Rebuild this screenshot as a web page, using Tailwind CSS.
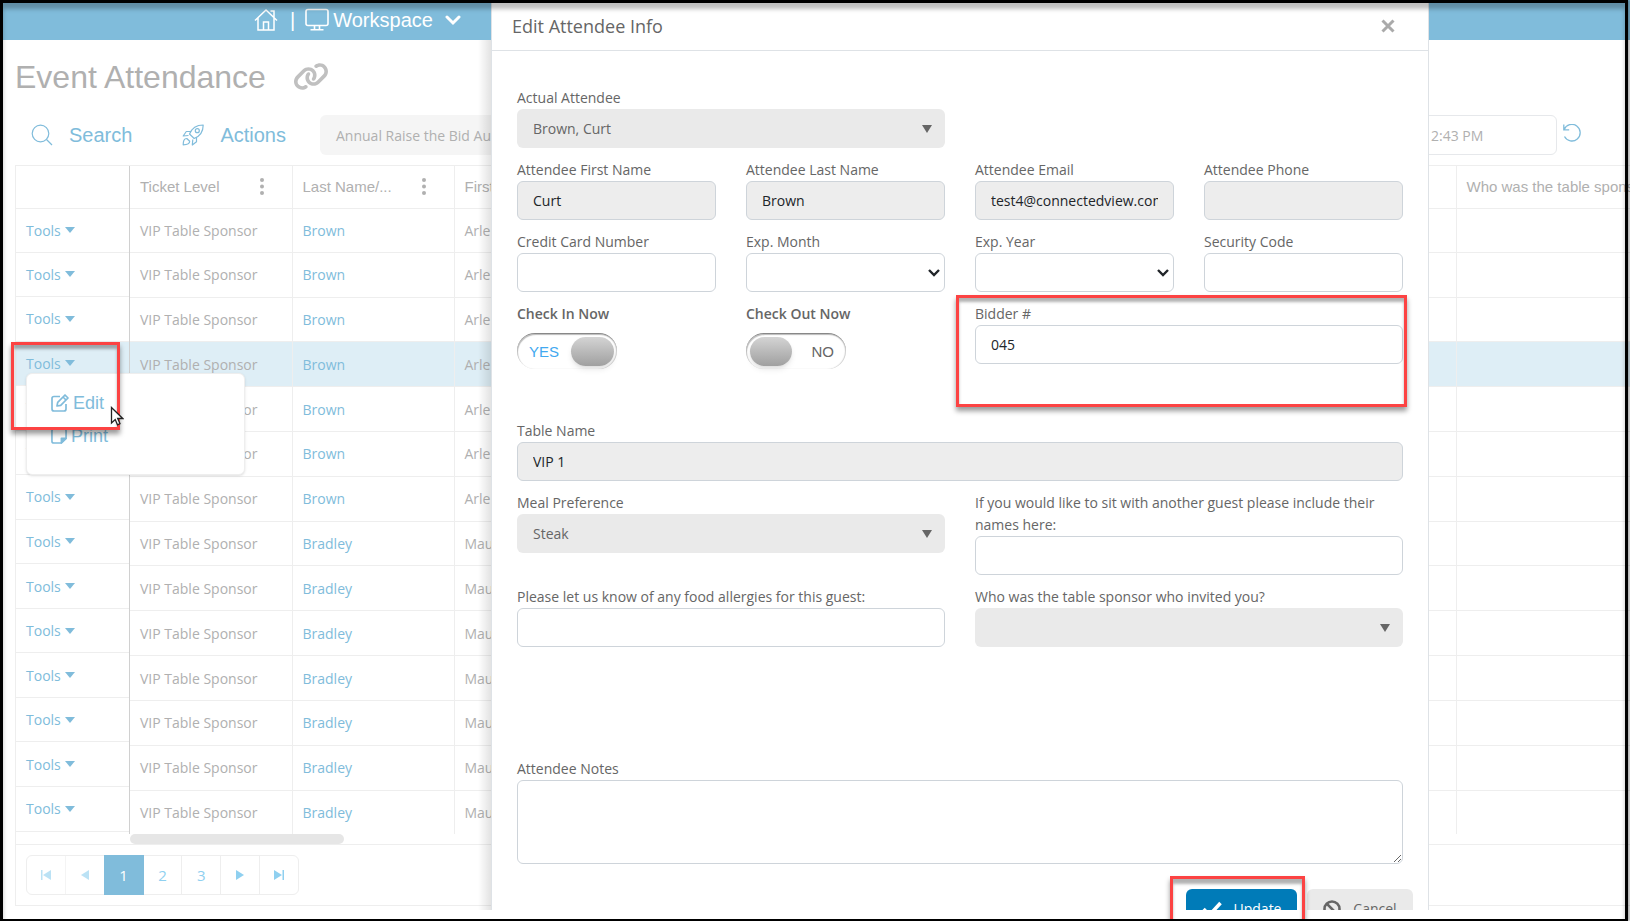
<!DOCTYPE html>
<html lang="en">
<head>
    <meta charset="UTF-8">
    <meta name="viewport" content="width=device-width, initial-scale=1.0">
    <title>Event Attendance</title>
    <script src="https://cdn.jsdelivr.net/npm/@tailwindcss/browser@4"></script>
</head>
<body class="relative h-screen overflow-hidden bg-white font-['Open_Sans',sans-serif] text-[14px] text-[#b0b0b0]">

    <!-- Top navigation -->
    <header class="relative flex h-10 items-center bg-[#80bcdb] pl-[254px] font-['Liberation_Sans',sans-serif] text-[20px] text-white">
        <a href="#" aria-label="Home">
            <svg class="size-6" viewBox="0 0 24 24" fill="none" stroke="currentColor" stroke-width="1.5"><path d="M1 12.500 12 2l11 10.500M4 10v12h16V10M16.500 3H20v7M9.500 22v-8h5v8"/></svg>
        </a>
        <span class="pr-2.5 pl-3">|</span>
        <button class="flex items-center gap-1">
            <svg class="size-6" viewBox="0 0 24 24" fill="none" stroke="currentColor" stroke-width="1.600"><rect x="1" y="1.500" width="22" height="16" rx="2"/><path d="M9.500 18v3.500M14.500 18v3.500M5.500 21.700h13"/></svg>
            Workspace
            <svg class="ml-2 size-4" viewBox="0 0 16 16" fill="none" stroke="currentColor" stroke-width="3" stroke-linecap="round"><path d="m2 5 6 6 6-6"/></svg>
        </button>
    </header>

    <main class="ml-[15px]">
        <div class="flex h-[75px] items-center gap-[27px] pb-0.5 font-['Liberation_Sans',sans-serif]">
            <h1 class="text-[32px]">Event Attendance</h1>
            <svg class="h-[29px] w-9 fill-[#c0c0c0]" viewBox="0 0 640 512"><path d="M579.8 267.7c56.5-56.5 56.5-148 0-204.5c-50-50-128.800-56.500-186.300-15.400l-1.600 1.100c-14.400 10.300-17.700 30.300-7.400 44.600s30.300 17.700 44.600 7.400l1.600-1.100c32.100-22.900 76-19.300 103.800 8.600c31.500 31.500 31.500 82.500 0 114L422.300 334.800c-31.500 31.500-82.500 31.500-114 0c-27.900-27.900-31.500-71.800-8.600-103.800l1.100-1.600c10.300-14.400 6.900-34.400-7.400-44.600s-34.400-6.900-44.600 7.400l-1.100 1.600C206.500 251.200 213 330 263 380c56.500 56.500 148 56.500 204.500 0L579.800 267.700zM60.200 244.300c-56.500 56.500-56.500 148 0 204.500c50 50 128.800 56.500 186.300 15.400l1.600-1.100c14.400-10.300 17.700-30.300 7.400-44.600s-30.300-17.700-44.600-7.400l-1.600 1.100c-32.100 22.900-76 19.300-103.800-8.600C74 372 74 321 105.500 289.500L217.700 177.200c31.500-31.500 82.500-31.500 114 0c27.900 27.900 31.500 71.800 8.600 103.900l-1.100 1.600c-10.300 14.400-6.900 34.400 7.400 44.600s34.400 6.900 44.600-7.400l1.100-1.600C433.500 260.800 427 182 377 132c-56.500-56.500-148-56.500-204.500 0L60.200 244.300z"/></svg>
        </div>

        <!-- Toolbar -->
        <div class="flex h-10 items-center pr-[73px]">
            <div class="flex w-[305px] items-center font-['Liberation_Sans',sans-serif] text-[20px] text-[#80bcdb]">
                <button class="flex items-center gap-4 pl-4">
                    <svg class="size-[22px]" viewBox="0 0 22 22" fill="none" stroke="currentColor" stroke-width="1.200"><circle cx="9.500" cy="9.500" r="8.300"/><path d="m15.500 15.500 5.500 5.500"/></svg>
                    Search
                </button>
                <button class="flex items-center gap-4 pl-[50px]">
                    <svg class="size-[22px]" viewBox="0 0 22 22" fill="none" stroke="currentColor" stroke-width="1.200" stroke-linejoin="round"><path d="M7.500 10C9.500 5 14 1 21.200 1c0 7-4 11.500-9 13.500zM8.500 7.500H4.300L1.200 12l5.300-.5M14.500 13.500v4.200L10.300 21l.5-5.500"/><circle cx="15.300" cy="6.700" r="2"/><path d="M4.800 14.500c-2.800 0-3.600 2.500-3.600 6.300 3.800 0 6.500-.8 6.500-3.500z"/></svg>
                    Actions
                </button>
            </div>
            <button class="h-10 flex-1 rounded-md bg-[#f5f5f5] pl-4 text-left">Annual Raise the Bid Auction</button>
            <input aria-label="Date" value="2:43 PM" class="h-10 w-[177px] rounded-md border border-[#e6e8eb] pl-[50px]">
            <button aria-label="Reset" class="-mr-6 ml-1.5 text-[#80bcdb]">
                <svg class="mb-1 size-[18px]" viewBox="0 0 18 18" fill="none" stroke="currentColor" stroke-width="1.300"><path d="M.8.500v5.300h5.400M1.200 5.500A8.300 8.300 0 1 1 1.500 12.500"/></svg>
            </button>
        </div>

        <!-- Attendance grid -->
        <section class="mt-2.5 border-y border-l border-[#eee]">
            <div class="flex h-[678px]">
                <div class="relative w-[113px] shrink-0">
                    <table class="w-full">
                        <thead><tr class="h-[42px] border-b border-[#eee]"><th></th></tr></thead>
                    </table>
                    <table class="h-[623px] w-full"><tbody id="toolRows"></tbody></table>
                    <!-- Row menu -->
                    <div class="absolute top-[207px] left-[10px] flex h-[102px] w-[219px] flex-col items-start gap-[9px] rounded-md border border-[#eee] bg-white pt-[17px] pl-6 font-['Liberation_Sans',sans-serif] text-[18px] text-[#80bcdb] shadow-sm">
                        <button class="flex h-6 items-center gap-1">
                            <svg class="size-[18px]" viewBox="0 0 18 18" fill="none" stroke="currentColor" stroke-width="1.700" stroke-linejoin="round"><path d="M9 2.500H3Q1 2.500 1 4.500V15q0 2 2 2h10q2 0 2-2V10M6 12l.7-3.700L14 1l3 3-7.300 7.300zM12 3l3 3"/></svg>
                            Edit
                        </button>
                        <button class="flex h-6 items-center gap-1">
                            <svg class="size-4" viewBox="0 0 17 17" fill="none" stroke="currentColor" stroke-width="1.700" stroke-linejoin="round"><path d="M3 1h11q2 0 2 2v8l-5 5H3q-2 0-2-2V3q0-2 2-2z"/><path d="M16 11h-5v5z" fill="currentColor"/></svg>
                            Print
                        </button>
                    </div>
                </div>
                <div class="flex h-[668px] min-w-0 flex-1 flex-col overflow-hidden border-l border-[#d0d0d0]">
                    <table class="w-full shrink-0 table-fixed text-left">
                        <colgroup><col class="w-[162px]"><col class="w-[162px]"><col><col class="w-[174px]"></colgroup>
                        <thead class="font-['Liberation_Sans',sans-serif] text-[15px]">
                            <tr class="h-[42px] border-b border-[#eee]">
                                <th class="border-r border-[#eee] px-2.5 font-normal"><div class="flex items-center justify-between pr-[18px]">Ticket Level <svg class="h-[17px] w-1 fill-[#b0b0b0]" viewBox="0 0 4 17"><circle cx="2" cy="2" r="2"/><circle cx="2" cy="8.500" r="2"/><circle cx="2" cy="15" r="2"/></svg></div></th>
                                <th class="border-r border-[#eee] px-2.5 font-normal"><div class="flex items-center justify-between pr-[18px]">Last Name/... <svg class="h-[17px] w-1 fill-[#b0b0b0]" viewBox="0 0 4 17"><circle cx="2" cy="2" r="2"/><circle cx="2" cy="8.500" r="2"/><circle cx="2" cy="15" r="2"/></svg></div></th>
                                <th class="border-r border-[#eee] px-2.5 font-normal">First Name</th>
                                <th class="px-2.5 font-normal whitespace-nowrap">Who was the table sponsor</th>
                            </tr>
                        </thead>
                    </table>
                    <table class="h-[627px] w-full shrink-0 table-fixed text-left">
                        <colgroup><col class="w-[162px]"><col class="w-[162px]"><col><col class="w-[174px]"></colgroup>
                        <tbody id="guestRows"></tbody>
                    </table>
                </div>
            </div>
            <div class="-mt-[10px] ml-[114px] h-[10px] w-[214px] rounded-full bg-[#e6e6e6]"></div>
            <nav class="border-t border-[#eee] px-2.5 py-2.5">
                <div class="flex h-10 w-[273px] rounded-md border border-[#eee] text-[15px] text-[#8fd0f0]">
                    <button aria-label="First page" class="grid flex-1 place-items-center border-r border-[#eee] opacity-60"><svg class="size-2.5" viewBox="0 0 10 10" fill="currentColor"><path d="M0 0h1.500v10H0zM10 0v10L2 5z"/></svg></button>
                    <button aria-label="Previous page" class="grid flex-1 place-items-center opacity-60"><svg class="size-2.5" viewBox="0 0 10 10" fill="currentColor"><path d="M9 0v10L1 5z"/></svg></button>
                    <button class="-my-px w-10 bg-[#80bcdb] text-white">1</button>
                    <button class="flex-1 border-r border-[#eee]">2</button>
                    <button class="flex-1 border-r border-[#eee]">3</button>
                    <button aria-label="Next page" class="grid flex-1 place-items-center border-r border-[#eee]"><svg class="size-2.5" viewBox="0 0 10 10" fill="currentColor"><path d="M1 0v10l8-5z"/></svg></button>
                    <button aria-label="Last page" class="grid flex-1 place-items-center"><svg class="size-2.5" viewBox="0 0 10 10" fill="currentColor"><path d="M8.500 0H10v10H8.500zM0 0v10l8-5z"/></svg></button>
                </div>
            </nav>
        </section>
    </main>

    <!-- Shade beside the dialog -->
    <div class="absolute top-10 bottom-[11px] left-[478px] w-3.5 bg-linear-to-r from-transparent to-black/12"></div>

    <!-- Edit dialog -->
    <div role="dialog" aria-labelledby="dialogTitle" class="absolute top-0 right-[201px] bottom-[11px] left-[491px] overflow-hidden border-x border-[#dee2e6] bg-white text-[#666]">
        <div class="flex h-[51px] items-center justify-between border-b border-[#dee2e6] pt-0.5 pr-[33px] pl-5">
            <h2 id="dialogTitle" class="text-[18px]">Edit Attendee Info</h2>
            <button aria-label="Close"><svg class="size-3.5" viewBox="0 0 14 14" stroke="#aaa" stroke-width="3"><path d="m1.500 1.500 11 11M12.500 1.500l-11 11"/></svg></button>
        </div>
        <form class="px-[25px] pt-9 leading-[22px]">
            <div class="grid grid-cols-4 gap-x-[30px] gap-y-[11px]">
                <div class="col-span-2">
                    <label for="actual">Actual Attendee</label>
                    <div class="relative">
                        <select id="actual" class="block h-[39px] w-full appearance-none rounded-md bg-[#eaeaea] px-4"><option>Brown, Curt</option></select>
                        <svg class="pointer-events-none absolute top-4 right-[13px] h-2 w-2.5 fill-[#666]" viewBox="0 0 10 8"><path d="M0 0h10L5 8z"/></svg>
                    </div>
                </div>
                <div class="col-start-1"><label for="first">Attendee First Name</label><input id="first" value="Curt" class="block h-[39px] w-full rounded-md border border-[#ced4da] bg-[#ededed] px-[15px] text-[#212529]"></div>
                <div><label for="last">Attendee Last Name</label><input id="last" value="Brown" class="block h-[39px] w-full rounded-md border border-[#ced4da] bg-[#ededed] px-[15px] text-[#212529]"></div>
                <div><label for="email">Attendee Email</label><input id="email" value="test4@connectedview.com" class="block h-[39px] w-full rounded-md border border-[#ced4da] bg-[#ededed] px-[15px] text-[#212529]"></div>
                <div><label for="phone">Attendee Phone</label><input id="phone" class="block h-[39px] w-full rounded-md border border-[#ced4da] bg-[#ededed] px-[15px]"></div>
                <div><label for="card">Credit Card Number</label><input id="card" class="block h-[39px] w-full rounded-md border border-[#ced4da] px-[15px]"></div>
                <div>
                    <label for="month">Exp. Month</label>
                    <div class="relative">
                        <select id="month" class="block h-[39px] w-full appearance-none rounded-md border border-[#ced4da] px-[15px]"><option></option></select>
                        <svg class="pointer-events-none absolute top-4 right-[5px] h-2 w-3" viewBox="0 0 12 8" fill="none" stroke="#212529" stroke-width="2.400"><path d="m1 1 5 5 5-5"/></svg>
                    </div>
                </div>
                <div>
                    <label for="year">Exp. Year</label>
                    <div class="relative">
                        <select id="year" class="block h-[39px] w-full appearance-none rounded-md border border-[#ced4da] px-[15px]"><option></option></select>
                        <svg class="pointer-events-none absolute top-4 right-[5px] h-2 w-3" viewBox="0 0 12 8" fill="none" stroke="#212529" stroke-width="2.400"><path d="m1 1 5 5 5-5"/></svg>
                    </div>
                </div>
                <div><label for="code">Security Code</label><input id="code" class="block h-[39px] w-full rounded-md border border-[#ced4da] px-[15px]"></div>

                <div class="h-[106px]">
                    <label for="checkIn" class="font-semibold">Check In Now</label>
                    <label class="mt-2 flex h-9 w-[100px] items-center justify-between rounded-full border-t border-[#888] pr-[3px] pl-3 font-['Liberation_Sans',sans-serif] text-[15px] text-[#42a9f0] shadow-[inset_1px_1px_1px_#bbb,inset_-1px_0_1px_#ccc]">
                        <input id="checkIn" type="checkbox" checked class="sr-only">YES
                        <span class="h-[29px] w-[43px] rounded-full bg-linear-to-b from-[#d4d4d4] to-[#a0a0a0] shadow-md"></span>
                    </label>
                </div>
                <div class="h-[106px]">
                    <label for="checkOut" class="font-semibold">Check Out Now</label>
                    <label class="mt-2 flex h-9 w-[100px] items-center justify-between rounded-full border-t border-[#888] pr-3 pl-1 font-['Liberation_Sans',sans-serif] text-[15px] shadow-[inset_1px_1px_1px_#bbb,inset_-1px_0_1px_#ccc]">
                        <input id="checkOut" type="checkbox" class="sr-only">
                        <span class="h-[29px] w-[42px] rounded-full bg-linear-to-b from-[#d4d4d4] to-[#a0a0a0] shadow-md"></span>NO
                    </label>
                </div>
                <div class="relative col-span-2">
                    <label for="bidder">Bidder #</label>
                    <input id="bidder" value="045" class="block h-[39px] w-full rounded-md border border-[#ced4da] px-[15px] text-[#212529]">
                    <!-- Callout -->
                    <div class="pointer-events-none absolute -top-2 -right-1 -left-[19px] h-[112px] border-3 border-[#fc4343] shadow-[0_4px_5px_rgb(0_0_0/0.4),inset_0_4px_3px_rgb(0_0_0/0.3)]"></div>
                </div>

                <div class="col-span-4"><label for="tableName">Table Name</label><input id="tableName" value="VIP 1" class="block h-[39px] w-full rounded-md border border-[#ced4da] bg-[#ededed] px-[15px] text-[#212529]"></div>
                <div class="col-span-2">
                    <label for="meal">Meal Preference</label>
                    <div class="relative">
                        <select id="meal" class="block h-[39px] w-full appearance-none rounded-md bg-[#eaeaea] px-4"><option>Steak</option></select>
                        <svg class="pointer-events-none absolute top-4 right-[13px] h-2 w-2.5 fill-[#666]" viewBox="0 0 10 8"><path d="M0 0h10L5 8z"/></svg>
                    </div>
                </div>
                <div class="col-span-2"><label for="sit" class="block">If you would like to sit with another guest please include their names here:</label><input id="sit" class="block h-[39px] w-full rounded-md border border-[#ced4da] px-[15px]"></div>
                <div class="col-span-2"><label for="allergies">Please let us know of any food allergies for this guest:</label><input id="allergies" class="block h-[39px] w-full rounded-md border border-[#ced4da] px-[15px]"></div>
                <div class="col-span-2">
                    <label for="sponsor">Who was the table sponsor who invited you?</label>
                    <div class="relative">
                        <select id="sponsor" class="block h-[39px] w-full appearance-none rounded-md bg-[#eaeaea] px-4"><option></option></select>
                        <svg class="pointer-events-none absolute top-4 right-[13px] h-2 w-2.5 fill-[#666]" viewBox="0 0 10 8"><path d="M0 0h10L5 8z"/></svg>
                    </div>
                </div>
                <div class="col-span-4 mt-[100px]"><label for="notes">Attendee Notes</label><textarea id="notes" class="block h-[84px] w-full rounded-md border border-[#ced4da] px-[15px]"></textarea></div>
            </div>
            <div class="-mr-2.5 mt-[25px] flex justify-end gap-2.5">
                <button type="button" class="flex h-10 w-[111px] items-center justify-center gap-3 rounded-md bg-[#007bb8] text-white"><svg class="h-4 w-5" viewBox="0 0 20 16" fill="none" stroke="currentColor" stroke-width="3.500"><path d="m1.500 8 6 6L18.500 2"/></svg>Update</button>
                <button type="button" class="flex h-10 w-[106px] items-center justify-center gap-3 rounded-md bg-[#eaeaea]"><svg class="size-[18px]" viewBox="0 0 18 18" fill="none" stroke="currentColor" stroke-width="2.600"><circle cx="9" cy="9" r="7.500"/><path d="m3.700 3.700 10.600 10.600"/></svg>Cancel</button>
            </div>
        </form>
    </div>

    <!-- Callouts over the page -->
    <div class="pointer-events-none absolute top-[342px] left-[11px] h-[88px] w-[109px] border-3 border-[#fc4343] shadow-[0_4px_5px_rgb(0_0_0/0.4),inset_0_4px_3px_rgb(0_0_0/0.3)]"></div>
    <div class="pointer-events-none absolute right-[325px] bottom-0 h-[45px] w-[135px] border-3 border-b-0 border-[#fc4343] shadow-[0_4px_5px_rgb(0_0_0/0.4),inset_0_5px_3px_rgb(0_0_0/0.3)]"></div>
    <svg class="absolute top-[406px] left-[110px] h-5 w-[14px]" viewBox="0 0 14 20"><path d="M1.500 1.500v15.500l3.700-3.500 2.300 5.300 2.500-1.100-2.300-5.200h5z" fill="#fff" stroke="#222" stroke-width="1.300"/></svg>

    <!-- Frame -->
    <div class="pointer-events-none absolute inset-y-0 right-[2px] left-0 border-3 border-b-2 border-black shadow-[inset_0_6px_4px_rgb(0_0_0/0.25),2px_0_2px_rgb(0_0_0/0.3)]"></div>

    <script>
        const names = ['Brown', 'Brown', 'Brown', 'Brown', 'Brown', 'Brown', 'Brown', 'Bradley', 'Bradley', 'Bradley', 'Bradley', 'Bradley', 'Bradley', 'Bradley'];
        const toolRows = document.getElementById('toolRows');
        const guestRows = document.getElementById('guestRows');

        names.forEach((name, i) => {
            const bg = i === 3 ? 'bg-[#deeef6]' : '';
            const first = name === 'Brown' ? 'Arlene' : 'Maureen';
            toolRows.innerHTML += `<tr class="border-b border-[#eee] ${bg}"><td class="pl-2.5">
                <button class="flex items-center gap-1 text-[#80bcdb]">Tools <svg class="h-[6px] w-2.5" viewBox="0 0 10 6" fill="currentColor"><path d="M0 0h10L5 6z"/></svg></button></td></tr>`;
            guestRows.innerHTML += `<tr class="border-b border-[#eee] ${bg}">
                <td class="border-r border-[#eee] px-2.5">VIP Table Sponsor</td>
                <td class="border-r border-[#eee] px-2.5"><a href="#" class="text-[#80bcdb]">${name}</a></td>
                <td class="border-r border-[#eee] px-2.5">${first}</td><td></td></tr>`;
        });
    </script>
</body>
</html>
